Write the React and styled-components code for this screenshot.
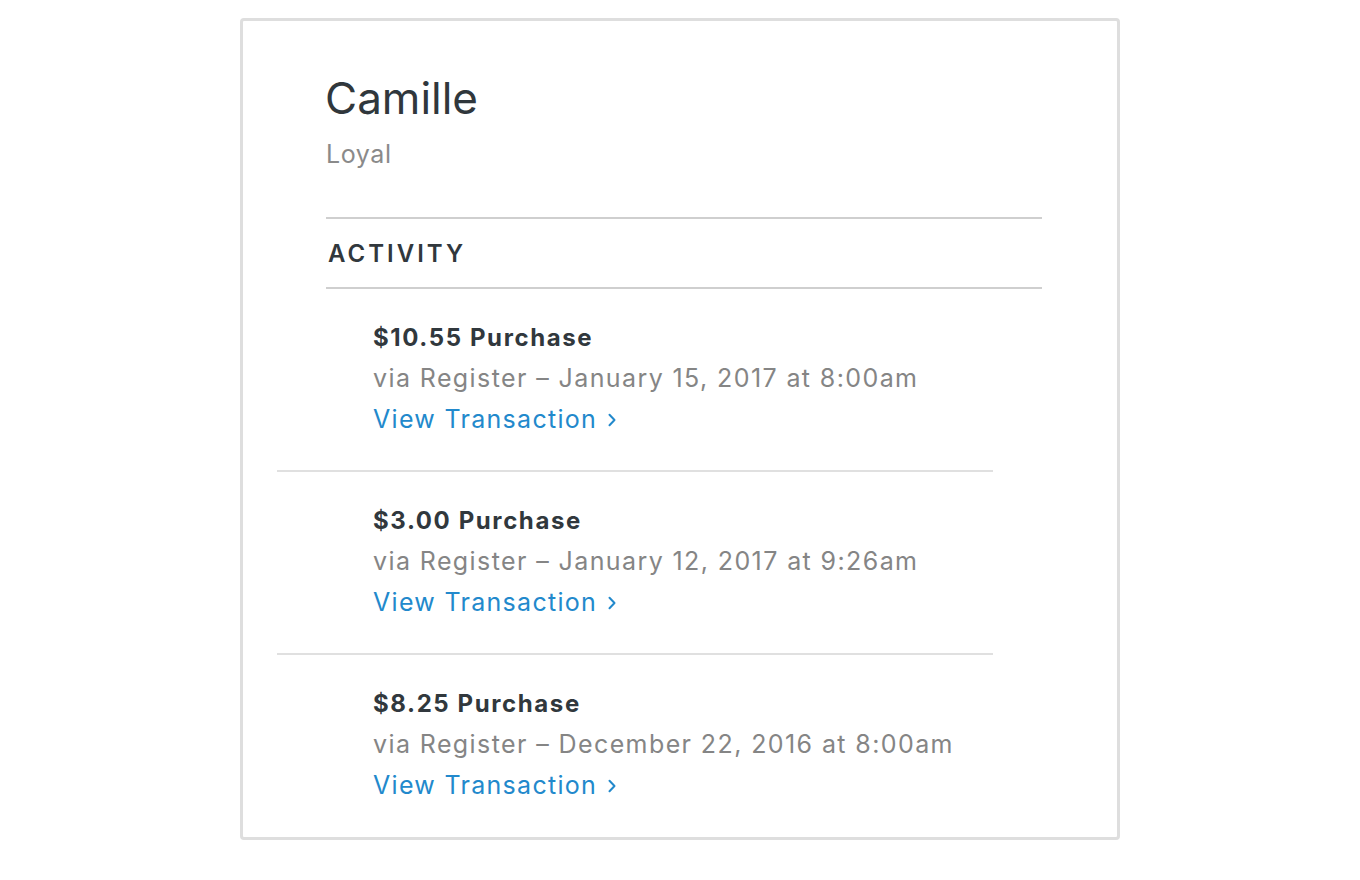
import React from "react";
import styled, { createGlobalStyle } from "styled-components";

const Global = createGlobalStyle`
  html, body { margin: 0; padding: 0; background: #ffffff; }
  body { font-family: Inter, "Open Sans", sans-serif; -webkit-font-smoothing: antialiased; }
`;

const Page = styled.div`
  display: flex;
  justify-content: center;
  padding-top: 18px;
`;

const Card = styled.section`
  box-sizing: border-box;
  width: 880px;
  height: 822px;
  border: 3px solid #dedede;
  border-radius: 4px;
  background: #fff;
  padding: 53px 75px 0 82px;
`;

const Name = styled.h1`
  margin: 0;
  font-size: 44px;
  line-height: 48px;
  font-weight: 400;
  color: #30373c;
`;

const Status = styled.div`
  margin-top: 19px;
  padding-left: 1px;
  font-size: 25px;
  line-height: 26px;
  letter-spacing: 0.6px;
  color: #8a8a8a;
`;

const SectionHeader = styled.div`
  margin-top: 50px;
  margin-left: 1px;
  border-top: 2px solid #cfcfcf;
  border-bottom: 2px solid #cfcfcf;
  height: 68px;
  display: flex;
  align-items: center;
  padding-left: 2px;
  font-size: 24px;
  font-weight: 600;
  letter-spacing: 3px;
  color: #31383d;
  text-transform: uppercase;
`;

const List = styled.div`
  margin-left: -48px;
  width: 716px;
`;

const Item = styled.div`
  padding: 28px 0 30px 96px;
  border-bottom: ${(p) => (p.$last ? "none" : "2px solid #e0e0e0")};
  display: flex;
  flex-direction: column;
`;

const Title = styled.div`
  font-size: 24px;
  line-height: 41px;
  font-weight: 700;
  letter-spacing: 1.6px;
  color: #31383d;
`;

const Meta = styled.div`
  font-size: 25px;
  line-height: 41px;
  letter-spacing: 1.4px;
  color: #858585;
`;

const Link = styled.a`
  font-size: 25px;
  line-height: 41px;
  letter-spacing: 1.3px;
  color: #2289cc;
  text-decoration: none;
  display: inline-flex;
  align-items: center;
  gap: 10px;
`;

const Chevron = () => (
  <svg width="10" height="14" viewBox="0 0 10 14" aria-hidden="true">
    <path d="M2.5 1.8 L7.5 7 L2.5 12.2" fill="none" stroke="#2289cc" strokeWidth="2" strokeLinecap="round" strokeLinejoin="round" />
  </svg>
);

const items = [
  { amount: "$10.55", date: "January 15, 2017 at 8:00am" },
  { amount: "$3.00", date: "January 12, 2017 at 9:26am" },
  { amount: "$8.25", date: "December 22, 2016 at 8:00am" },
];

export default function App() {
  return (
    <>
      <Global />
      <Page>
        <Card>
          <Name>Camille</Name>
          <Status>Loyal</Status>
          <SectionHeader>Activity</SectionHeader>
          <List>
            {items.map((it, i) => (
              <Item key={i} $last={i === items.length - 1}>
                <Title>{it.amount} Purchase</Title>
                <Meta>via Register – {it.date}</Meta>
                <div>
                  <Link href="#">
                    View Transaction <Chevron />
                  </Link>
                </div>
              </Item>
            ))}
          </List>
        </Card>
      </Page>
    </>
  );
}
